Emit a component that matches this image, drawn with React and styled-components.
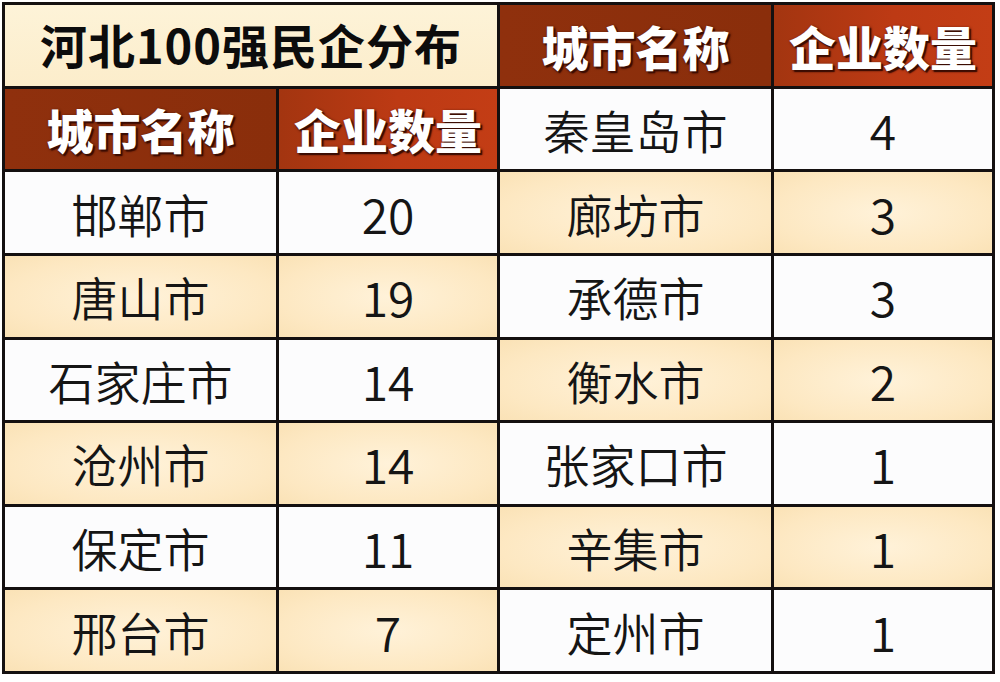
import React from "react";
import styled, { createGlobalStyle, css } from "styled-components";

const Global = createGlobalStyle`
  html, body { margin: 0; padding: 0; background: #ffffff; }
  body { font-family: "Noto Sans CJK SC", "Noto Sans", sans-serif; }
`;

const Page = styled.div`
  width: 1000px;
  height: 682px;
  padding: 2px 0 0 2px;
  box-sizing: border-box;
  background: #ffffff;
`;

const Table = styled.div`
  width: 993px;
  height: 672px;
  box-sizing: border-box;
  display: grid;
  grid-template-columns: 271px 218px 271px 218px;
  grid-template-rows: repeat(8, 1fr);
  gap: 3px;
  padding: 3px;
  background: #141010;
`;

const Cell = styled.div`
  display: flex;
  align-items: center;
  justify-content: center;
  font-family: "Noto Sans CJK SC", "Noto Sans", sans-serif;
  font-size: ${(p) => (p.$num ? "48px" : "46px")};
  font-weight: 350;
  color: #151515;
  line-height: 1;
  ${(p) =>
    p.$tone === "cream"
      ? css`
          background: radial-gradient(ellipse at 50% 50%, #fff2d9 0%, #fde8c2 70%, #fae2b6 100%);
        `
      : css`
          background: #fcfcfd;
        `}
`;

const Title = styled.div`
  grid-column: ${(p) => p.$col} / span 2;
  display: flex;
  align-items: center;
  justify-content: center;
  background: linear-gradient(180deg, #fdf3d8 0%, #fcedcb 100%);
  font-family: "Noto Sans CJK SC", "Noto Sans", sans-serif;
  font-size: 47px;
  font-weight: 700;
  color: #0c0c0c;
  letter-spacing: 1px;
  padding-bottom: 4px;
`;

const Head = styled.div`
  display: flex;
  align-items: center;
  justify-content: center;
  font-family: "Noto Sans CJK SC", "Noto Sans", sans-serif;
  font-size: 47px;
  font-weight: 900;
  color: #ffffff;
  line-height: 1;
  text-shadow: 2px 2px 1px #3b0c02, 1px 1px 3px #2a0800;
  background: ${(p) =>
    p.$kind === "count"
      ? "linear-gradient(90deg, #a33510 0%, #bd3a14 55%, #c33d15 100%)"
      : "linear-gradient(90deg, #8f300d 0%, #8a2e0b 100%)"};
`;

const left = [
  ["邯郸市", "20"],
  ["唐山市", "19"],
  ["石家庄市", "14"],
  ["沧州市", "14"],
  ["保定市", "11"],
  ["邢台市", "7"],
];

const right = [
  ["秦皇岛市", "4"],
  ["廊坊市", "3"],
  ["承德市", "3"],
  ["衡水市", "2"],
  ["张家口市", "1"],
  ["辛集市", "1"],
  ["定州市", "1"],
];

export default function App() {
  const cells = [];
  cells.push(<Title key="t" $col={1}>河北100强民企分布</Title>);
  cells.push(<Head key="h1" $kind="name">城市名称</Head>);
  cells.push(<Head key="h2" $kind="count">企业数量</Head>);
  cells.push(<Head key="h3" $kind="name">城市名称</Head>);
  cells.push(<Head key="h4" $kind="count">企业数量</Head>);
  cells.push(<Cell key="r0a" $tone="white">{right[0][0]}</Cell>);
  cells.push(<Cell key="r0b" $tone="white" $num>{right[0][1]}</Cell>);
  left.forEach((l, i) => {
    const lt = i % 2 === 0 ? "white" : "cream";
    const r = right[i + 1];
    const rt = i % 2 === 0 ? "cream" : "white";
    cells.push(<Cell key={"l" + i + "a"} $tone={lt}>{l[0]}</Cell>);
    cells.push(<Cell key={"l" + i + "b"} $tone={lt} $num>{l[1]}</Cell>);
    cells.push(<Cell key={"r" + i + "a"} $tone={rt}>{r[0]}</Cell>);
    cells.push(<Cell key={"r" + i + "b"} $tone={rt} $num>{r[1]}</Cell>);
  });
  return (
    <Page>
      <Global />
      <Table>{cells}</Table>
    </Page>
  );
}
